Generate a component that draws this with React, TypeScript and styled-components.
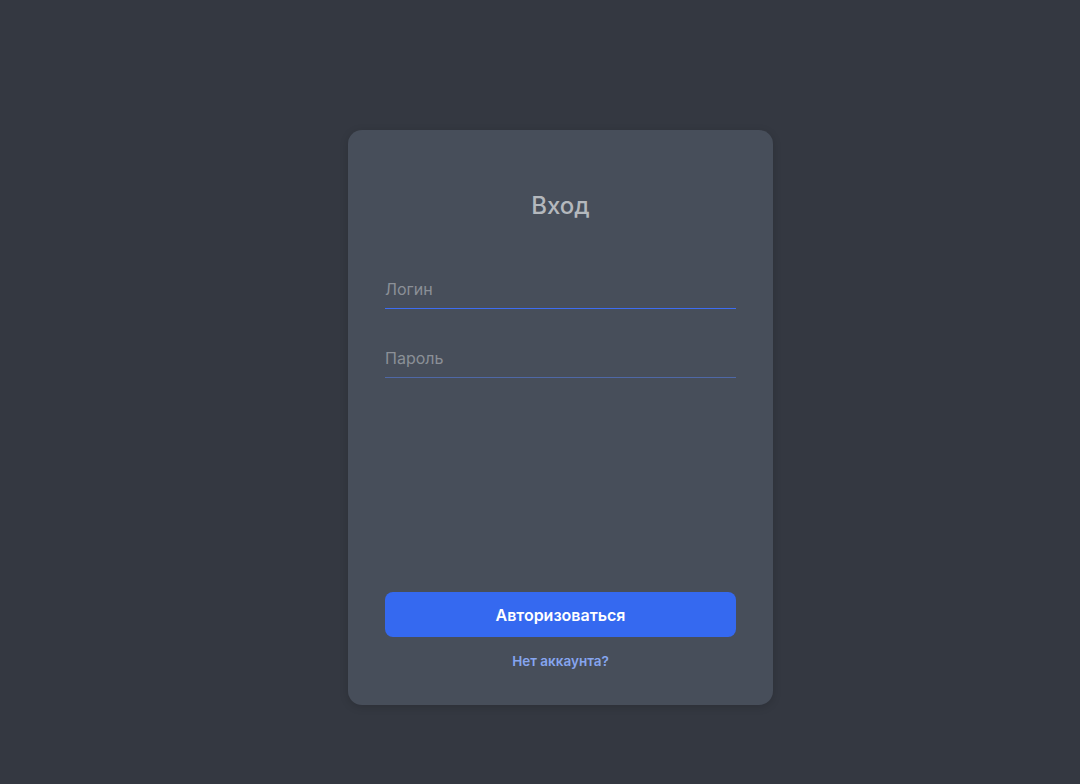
import React from "react";
import styled, { createGlobalStyle } from "styled-components";

const Global = createGlobalStyle`
  html, body { margin: 0; padding: 0; background: #343841; }
  body { font-family: Inter, "Noto Sans", sans-serif; }
  * { box-sizing: border-box; }
`;

const Page = styled.div`
  width: 1080px;
  height: 784px;
  display: flex;
  justify-content: center;
  padding: 130px 0 0 41px;
  background: #343841;
`;

const Card = styled.form`
  width: 425px;
  height: 575px;
  background: #474e5a;
  border-radius: 14px;
  box-shadow: 0 2px 8px rgba(0, 0, 0, 0.15);
  padding: 58px 37px 36px;
  display: flex;
  flex-direction: column;
`;

const Title = styled.h1`
  margin: 0 0 42px;
  text-align: center;
  font-size: 24px;
  font-weight: 500;
  line-height: 36px;
  color: #b4b8bd;
`;

const Fields = styled.div`
  display: flex;
  flex-direction: column;
  gap: 26px;
  flex: 1;
`;

const Input = styled.input<{ $active?: boolean }>`
  width: 100%;
  height: 43px;
  background: transparent;
  border: none;
  border-bottom: 1px solid ${(p) => (p.$active ? "#3e6df2" : "#4f68a6")};
  padding: 10px 0 6px;
  font-family: Inter, "Noto Sans", sans-serif;
  font-size: 16px;
  color: #d0d3d7;
  outline: none;
  &::placeholder { color: #8b9097; }
`;

const Button = styled.button`
  width: 100%;
  height: 45px;
  border: none;
  border-radius: 8px;
  background: #3569f0;
  color: #ffffff;
  font-family: Inter, "Noto Sans", sans-serif;
  font-size: 16px;
  font-weight: 600;
  cursor: pointer;
`;

const Link = styled.a`
  margin-top: 16px;
  align-self: center;
  font-size: 13.5px;
  font-weight: 600;
  color: #86a5ef;
  text-decoration: none;
  line-height: 16px;
`;

export default function App() {
  return (
    <>
      <Global />
      <Page>
        <Card onSubmit={(e) => e.preventDefault()}>
          <Title>Вход</Title>
          <Fields>
            <Input $active placeholder="Логин" />
            <Input type="password" placeholder="Пароль" />
          </Fields>
          <Button type="submit">Авторизоваться</Button>
          <Link href="#">Нет аккаунта?</Link>
        </Card>
      </Page>
    </>
  );
}
